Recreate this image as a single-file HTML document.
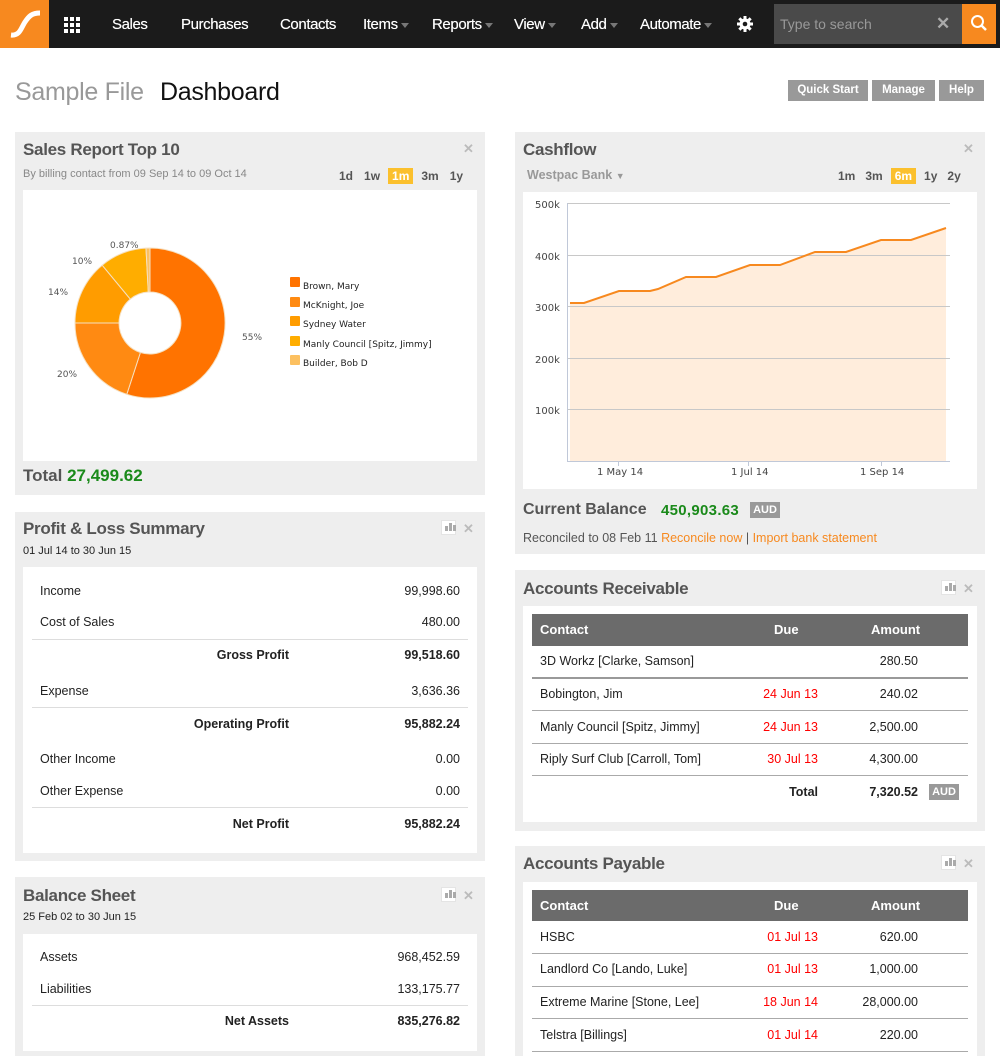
<!DOCTYPE html>
<html><head><meta charset="utf-8">
<style>
*{margin:0;padding:0;box-sizing:border-box}
body{width:1000px;height:1056px;overflow:hidden;background:#fff;font-family:"Liberation Sans",sans-serif;position:relative;color:#222}
.a{position:absolute;white-space:nowrap}
.nav{position:absolute;left:0;top:0;width:1000px;height:48px;background:#1b1b1b}
.nl{position:absolute;top:16px;color:#fff;font-size:15px;letter-spacing:-0.4px;text-shadow:0 0 0.4px #fff}
.car{display:inline-block;width:0;height:0;border-left:4px solid transparent;border-right:4px solid transparent;border-top:5px solid #777;margin-left:3px;vertical-align:middle}
.panel{position:absolute;background:#eee}
.wh{position:absolute;background:#fff}
.pt{position:absolute;font-weight:bold;font-size:17px;color:#555;letter-spacing:-0.3px}
.x{position:absolute;color:#bbb;font-size:13px;font-weight:bold}
.sub{position:absolute;font-size:11px;color:#888}
.t{position:absolute;font-size:12.5px;color:#222;white-space:nowrap}
.r{text-align:right}
.b{font-weight:bold}
.red{color:#f00}
.ln{position:absolute;height:1px;background:#ddd}
.ln2{position:absolute;height:1px;background:#aaa}
.th{position:absolute;background:#6b6b6b;color:#fff;font-weight:bold;font-size:13px}
.btn{position:absolute;top:80px;height:21px;background:#999;color:#fff;font-size:11.5px;font-weight:bold;text-align:center;line-height:21px}
.ico{position:absolute;width:15px;height:15px;background:#fff;border:1px solid #e4e4e4}
.ico i{position:absolute;bottom:3px;width:3px;background:#aaa}
.aud{position:absolute;background:#999;color:#fff;font-size:11px;font-weight:bold;text-align:center;line-height:16px}
</style></head><body>

<div class="nav">
  <div class="a" style="left:0;top:0;width:49px;height:48px;background:#f7891f">
    <svg width="49" height="48"><path d="M11 35 C20 36 21 28 25 22 C29 16 32 13 40 13" stroke="#fff" stroke-width="5" fill="none"/></svg>
  </div>
  <svg class="a" style="left:64px;top:17px" width="16" height="16"><g fill="#fff">
    <rect x="0" y="0" width="4" height="4"/><rect x="6" y="0" width="4" height="4"/><rect x="12" y="0" width="4" height="4"/>
    <rect x="0" y="6" width="4" height="4"/><rect x="6" y="6" width="4" height="4"/><rect x="12" y="6" width="4" height="4"/>
    <rect x="0" y="12" width="4" height="4"/><rect x="6" y="12" width="4" height="4"/><rect x="12" y="12" width="4" height="4"/></g></svg>
  <div class="nl" style="left:112px">Sales</div>
  <div class="nl" style="left:181px">Purchases</div>
  <div class="nl" style="left:280px">Contacts</div>
  <div class="nl" style="left:363px">Items<span class="car"></span></div>
  <div class="nl" style="left:432px">Reports<span class="car"></span></div>
  <div class="nl" style="left:514px">View<span class="car"></span></div>
  <div class="nl" style="left:581px">Add<span class="car"></span></div>
  <div class="nl" style="left:640px">Automate<span class="car"></span></div>
  <svg class="a" style="left:737px;top:16px" width="16" height="16" viewBox="0 0 16 16"><g fill="#fff"><circle cx="8" cy="8" r="5.5"/>
    <rect x="6.5" y="0" width="3" height="16"/><rect x="0" y="6.5" width="16" height="3"/>
    <rect x="6.5" y="0" width="3" height="16" transform="rotate(45 8 8)"/><rect x="6.5" y="0" width="3" height="16" transform="rotate(-45 8 8)"/></g>
    <circle cx="8" cy="8" r="2.3" fill="#1b1b1b"/></svg>
  <div class="a" style="left:774px;top:4px;width:188px;height:40px;background:#4a4a4a"></div>
  <div class="a" style="left:780px;top:16px;color:#999;font-size:14px">Type to search</div>
  <div class="a" style="left:936px;top:14px;color:#aaa;font-size:17px;font-weight:bold">✕</div>
  <div class="a" style="left:962px;top:4px;width:34px;height:40px;background:#f7891f"></div>
  <svg class="a" style="left:970px;top:14px" width="18" height="18"><circle cx="7.5" cy="7.5" r="5.5" stroke="#fff" stroke-width="2" fill="none"/><path d="M11.5 11.5 L16 16" stroke="#fff" stroke-width="2.5"/></svg>
</div>

<div class="a" style="left:15px;top:78px;font-size:25px;color:#999;letter-spacing:-0.3px">Sample File</div>
<div class="a" style="left:160px;top:78px;font-size:25px;color:#111;letter-spacing:-0.3px">Dashboard</div>
<div class="btn" style="left:788px;width:80px">Quick Start</div>
<div class="btn" style="left:872px;width:63px">Manage</div>
<div class="btn" style="left:939px;width:45px">Help</div>

<!-- Sales Report -->
<div class="panel" style="left:15px;top:132px;width:470px;height:363px"></div>
<div class="pt" style="left:23px;top:140px">Sales Report Top 10</div>
<div class="x" style="left:463px;top:141px">✕</div>
<div class="sub" style="left:23px;top:168px">By billing contact from 09 Sep 14 to 09 Oct 14</div>
<div class="a" style="left:339px;top:169px;font-size:12px;font-weight:bold;color:#555">
<span style="margin-right:11px">1d</span><span style="margin-right:8px">1w</span><span style="background:#fbc02d;color:#fff;padding:1px 4px;margin-right:8px">1m</span><span style="margin-right:11px">3m</span><span>1y</span></div>
<div class="wh" style="left:23px;top:190px;width:454px;height:271px"></div>
<svg class="a" style="left:0;top:0" width="500" height="500">
 <g stroke="#f6e0c0" stroke-width="1">
 <path d="M150 248 A75 75 0 1 1 126.8 394.3 L140.4 352.5 A31 31 0 1 0 150 292 Z" fill="#ff7300"/>
 <path d="M126.8 394.3 A75 75 0 0 1 75 323 L119 323 A31 31 0 0 0 140.4 352.5 Z" fill="#ff8a12"/>
 <path d="M75 323 A75 75 0 0 1 102.2 265.2 L130.3 299.1 A31 31 0 0 0 119 323 Z" fill="#ff9c00"/>
 <path d="M102.2 265.2 A75 75 0 0 1 146 248.1 L148.3 292 A31 31 0 0 0 130.3 299.1 Z" fill="#ffad00"/>
 <path d="M146 248.1 A75 75 0 0 1 150 248 L150 292 A31 31 0 0 0 148.3 292 Z" fill="#fcc060"/>
 </g>
 <g font-family="DejaVu Sans,sans-serif" font-size="9" fill="#555">
 <text x="110" y="248">0.87%</text><text x="72" y="264">10%</text><text x="48" y="295">14%</text><text x="57" y="377">20%</text><text x="242" y="340">55%</text>
 </g>
 <g font-family="DejaVu Sans,sans-serif" font-size="9" fill="#222">
 <rect x="290" y="277" width="10" height="10" rx="1" fill="#ff7300"/><text x="303" y="289">Brown, Mary</text>
 <rect x="290" y="297" width="10" height="10" rx="1" fill="#ff8a12"/><text x="303" y="308">McKnight, Joe</text>
 <rect x="290" y="316" width="10" height="10" rx="1" fill="#ff9c00"/><text x="303" y="327">Sydney Water</text>
 <rect x="290" y="336" width="10" height="10" rx="1" fill="#ffad00"/><text x="303" y="347">Manly Council [Spitz, Jimmy]</text>
 <rect x="290" y="355" width="10" height="10" rx="1" fill="#fcc060"/><text x="303" y="366">Builder, Bob D</text>
 </g>
</svg>
<div class="a" style="left:23px;top:466px;font-size:17px;font-weight:bold;color:#555">Total <span style="color:#1a8a1a">27,499.62</span></div>

<!-- P&L -->
<div class="panel" style="left:15px;top:512px;width:470px;height:349px"></div>
<div class="pt" style="left:23px;top:519px">Profit &amp; Loss Summary</div>
<div class="ico" style="left:441px;top:520px"><i style="left:3px;height:5px"></i><i style="left:7px;height:8px"></i><i style="left:11px;height:6px"></i></div>
<div class="x" style="left:463px;top:521px">✕</div>
<div class="t" style="left:23px;top:545px;font-size:11px">01 Jul 14 to 30 Jun 15</div>
<div class="wh" style="left:23px;top:567px;width:454px;height:286px"></div>
<div class="t" style="left:40px;top:584px">Income</div><div class="t r" style="left:360px;width:100px;top:584px">99,998.60</div>
<div class="t" style="left:40px;top:615px">Cost of Sales</div><div class="t r" style="left:360px;width:100px;top:615px">480.00</div>
<div class="ln" style="left:32px;width:436px;top:639px"></div>
<div class="t b r" style="left:150px;width:139px;top:648px">Gross Profit</div><div class="t b r" style="left:360px;width:100px;top:648px">99,518.60</div>
<div class="t" style="left:40px;top:684px">Expense</div><div class="t r" style="left:360px;width:100px;top:684px">3,636.36</div>
<div class="ln" style="left:32px;width:436px;top:707px"></div>
<div class="t b r" style="left:150px;width:139px;top:717px">Operating Profit</div><div class="t b r" style="left:360px;width:100px;top:717px">95,882.24</div>
<div class="t" style="left:40px;top:752px">Other Income</div><div class="t r" style="left:360px;width:100px;top:752px">0.00</div>
<div class="t" style="left:40px;top:784px">Other Expense</div><div class="t r" style="left:360px;width:100px;top:784px">0.00</div>
<div class="ln" style="left:32px;width:436px;top:807px"></div>
<div class="t b r" style="left:150px;width:139px;top:817px">Net Profit</div><div class="t b r" style="left:360px;width:100px;top:817px">95,882.24</div>

<!-- Balance sheet -->
<div class="panel" style="left:15px;top:877px;width:470px;height:179px"></div>
<div class="pt" style="left:23px;top:886px">Balance Sheet</div>
<div class="ico" style="left:441px;top:887px"><i style="left:3px;height:5px"></i><i style="left:7px;height:8px"></i><i style="left:11px;height:6px"></i></div>
<div class="x" style="left:463px;top:888px">✕</div>
<div class="t" style="left:23px;top:911px;font-size:11px">25 Feb 02 to 30 Jun 15</div>
<div class="wh" style="left:23px;top:934px;width:454px;height:117px"></div>
<div class="t" style="left:40px;top:950px">Assets</div><div class="t r" style="left:360px;width:100px;top:950px">968,452.59</div>
<div class="t" style="left:40px;top:982px">Liabilities</div><div class="t r" style="left:360px;width:100px;top:982px">133,175.77</div>
<div class="ln" style="left:32px;width:436px;top:1005px"></div>
<div class="t b r" style="left:150px;width:139px;top:1014px">Net Assets</div><div class="t b r" style="left:360px;width:100px;top:1014px">835,276.82</div>

<!-- Cashflow -->
<div class="panel" style="left:515px;top:132px;width:470px;height:422px"></div>
<div class="pt" style="left:523px;top:140px">Cashflow</div>
<div class="x" style="left:963px;top:141px">✕</div>
<div class="a" style="left:527px;top:168px;font-size:12.5px;font-weight:bold;color:#999">Westpac Bank <span style="font-size:9px">▼</span></div>
<div class="a" style="left:838px;top:169px;font-size:12px;font-weight:bold;color:#555">
<span style="margin-right:10px">1m</span><span style="margin-right:8px">3m</span><span style="background:#fbc02d;color:#fff;padding:1px 4px;margin-right:8px">6m</span><span style="margin-right:10px">1y</span><span>2y</span></div>
<div class="wh" style="left:523px;top:192px;width:454px;height:297px"></div>
<svg class="a" style="left:0;top:0" width="1000" height="500">
 <path d="M570 303 L584 303 L619 291 L650 291 L658 289 L686 277 L716 277 L750 265 L780 265 L815 252 L846 252 L881 240 L911 240 L946 228 L946 461 L570 461 Z" fill="#ffeddc"/>
 <g stroke="#c8c8c8" stroke-width="1">
 <line x1="567" y1="203.5" x2="950" y2="203.5"/><line x1="567" y1="255.5" x2="950" y2="255.5"/><line x1="567" y1="306.5" x2="950" y2="306.5"/><line x1="567" y1="358.5" x2="950" y2="358.5"/><line x1="567" y1="409.5" x2="950" y2="409.5"/>
 </g>
 <g stroke="#c0c8d8" stroke-width="1"><line x1="567.5" y1="203" x2="567.5" y2="461"/><line x1="567" y1="461.5" x2="950" y2="461.5"/>
 <line x1="618.5" y1="461" x2="618.5" y2="466"/><line x1="748.5" y1="461" x2="748.5" y2="466"/><line x1="881.5" y1="461" x2="881.5" y2="466"/></g>
 <path d="M570 303 L584 303 L619 291 L650 291 L658 289 L686 277 L716 277 L750 265 L780 265 L815 252 L846 252 L881 240 L911 240 L946 228" stroke="#f7891f" stroke-width="2" fill="none"/>
 <g font-family="DejaVu Sans,sans-serif" font-size="10" fill="#444">
 <text x="535" y="208">500k</text><text x="535" y="260">400k</text><text x="535" y="311">300k</text><text x="535" y="363">200k</text><text x="535" y="414">100k</text>
 <text x="597" y="475">1 May 14</text><text x="731" y="475">1 Jul 14</text><text x="860" y="475">1 Sep 14</text></g>
</svg>
<div class="a" style="left:523px;top:501px;font-size:16px;font-weight:bold;color:#555">Current Balance</div>
<div class="a" style="left:661px;top:502px;font-size:15px;color:#1a8a1a;font-weight:bold;letter-spacing:0.3px">450,903.63</div>
<div class="aud" style="left:750px;top:502px;width:30px">AUD</div>
<div class="a" style="left:523px;top:531px;font-size:12.5px;color:#555">Reconciled to 08 Feb 11 <span style="color:#f7891f">Reconcile now</span> | <span style="color:#f7891f">Import bank statement</span></div>

<!-- AR -->
<div class="panel" style="left:515px;top:570px;width:470px;height:261px"></div>
<div class="pt" style="left:523px;top:579px">Accounts Receivable</div>
<div class="ico" style="left:941px;top:580px"><i style="left:3px;height:5px"></i><i style="left:7px;height:8px"></i><i style="left:11px;height:6px"></i></div>
<div class="x" style="left:963px;top:581px">✕</div>
<div class="wh" style="left:523px;top:606px;width:454px;height:216px"></div>
<div class="th" style="left:532px;top:614px;width:436px;height:32px"></div>
<div class="a" style="left:540px;top:622px;color:#fff;font-weight:bold;font-size:13px">Contact</div>
<div class="a" style="left:774px;top:622px;color:#fff;font-weight:bold;font-size:13px">Due</div>
<div class="a" style="left:871px;top:622px;color:#fff;font-weight:bold;font-size:13px">Amount</div>
<div class="t" style="left:540px;top:654px">3D Workz [Clarke, Samson]</div><div class="t r" style="left:818px;width:100px;top:654px">280.50</div>
<div class="a" style="left:532px;top:677px;width:436px;height:2px;background:#999"></div>
<div class="t" style="left:540px;top:687px">Bobington, Jim</div><div class="t r red" style="left:718px;width:100px;top:687px">24 Jun 13</div><div class="t r" style="left:818px;width:100px;top:687px">240.02</div>
<div class="ln2" style="left:532px;width:436px;top:710px"></div>
<div class="t" style="left:540px;top:720px">Manly Council [Spitz, Jimmy]</div><div class="t r red" style="left:718px;width:100px;top:720px">24 Jun 13</div><div class="t r" style="left:818px;width:100px;top:720px">2,500.00</div>
<div class="ln2" style="left:532px;width:436px;top:743px"></div>
<div class="t" style="left:540px;top:752px">Riply Surf Club [Carroll, Tom]</div><div class="t r red" style="left:718px;width:100px;top:752px">30 Jul 13</div><div class="t r" style="left:818px;width:100px;top:752px">4,300.00</div>
<div class="ln2" style="left:532px;width:436px;top:775px"></div>
<div class="t b r" style="left:718px;width:100px;top:785px">Total</div><div class="t b r" style="left:818px;width:100px;top:785px">7,320.52</div>
<div class="aud" style="left:929px;top:784px;width:30px">AUD</div>

<!-- AP -->
<div class="panel" style="left:515px;top:846px;width:470px;height:210px"></div>
<div class="pt" style="left:523px;top:854px">Accounts Payable</div>
<div class="ico" style="left:941px;top:855px"><i style="left:3px;height:5px"></i><i style="left:7px;height:8px"></i><i style="left:11px;height:6px"></i></div>
<div class="x" style="left:963px;top:856px">✕</div>
<div class="wh" style="left:523px;top:882px;width:454px;height:174px"></div>
<div class="th" style="left:532px;top:890px;width:436px;height:31px"></div>
<div class="a" style="left:540px;top:898px;color:#fff;font-weight:bold;font-size:13px">Contact</div>
<div class="a" style="left:774px;top:898px;color:#fff;font-weight:bold;font-size:13px">Due</div>
<div class="a" style="left:871px;top:898px;color:#fff;font-weight:bold;font-size:13px">Amount</div>
<div class="t" style="left:540px;top:930px">HSBC</div><div class="t r red" style="left:718px;width:100px;top:930px">01 Jul 13</div><div class="t r" style="left:818px;width:100px;top:930px">620.00</div>
<div class="ln2" style="left:532px;width:436px;top:953px"></div>
<div class="t" style="left:540px;top:962px">Landlord Co [Lando, Luke]</div><div class="t r red" style="left:718px;width:100px;top:962px">01 Jul 13</div><div class="t r" style="left:818px;width:100px;top:962px">1,000.00</div>
<div class="ln2" style="left:532px;width:436px;top:986px"></div>
<div class="t" style="left:540px;top:995px">Extreme Marine [Stone, Lee]</div><div class="t r red" style="left:718px;width:100px;top:995px">18 Jun 14</div><div class="t r" style="left:818px;width:100px;top:995px">28,000.00</div>
<div class="ln2" style="left:532px;width:436px;top:1018px"></div>
<div class="t" style="left:540px;top:1028px">Telstra [Billings]</div><div class="t r red" style="left:718px;width:100px;top:1028px">01 Jul 14</div><div class="t r" style="left:818px;width:100px;top:1028px">220.00</div>
<div class="ln2" style="left:532px;width:436px;top:1051px"></div>
</body></html>
